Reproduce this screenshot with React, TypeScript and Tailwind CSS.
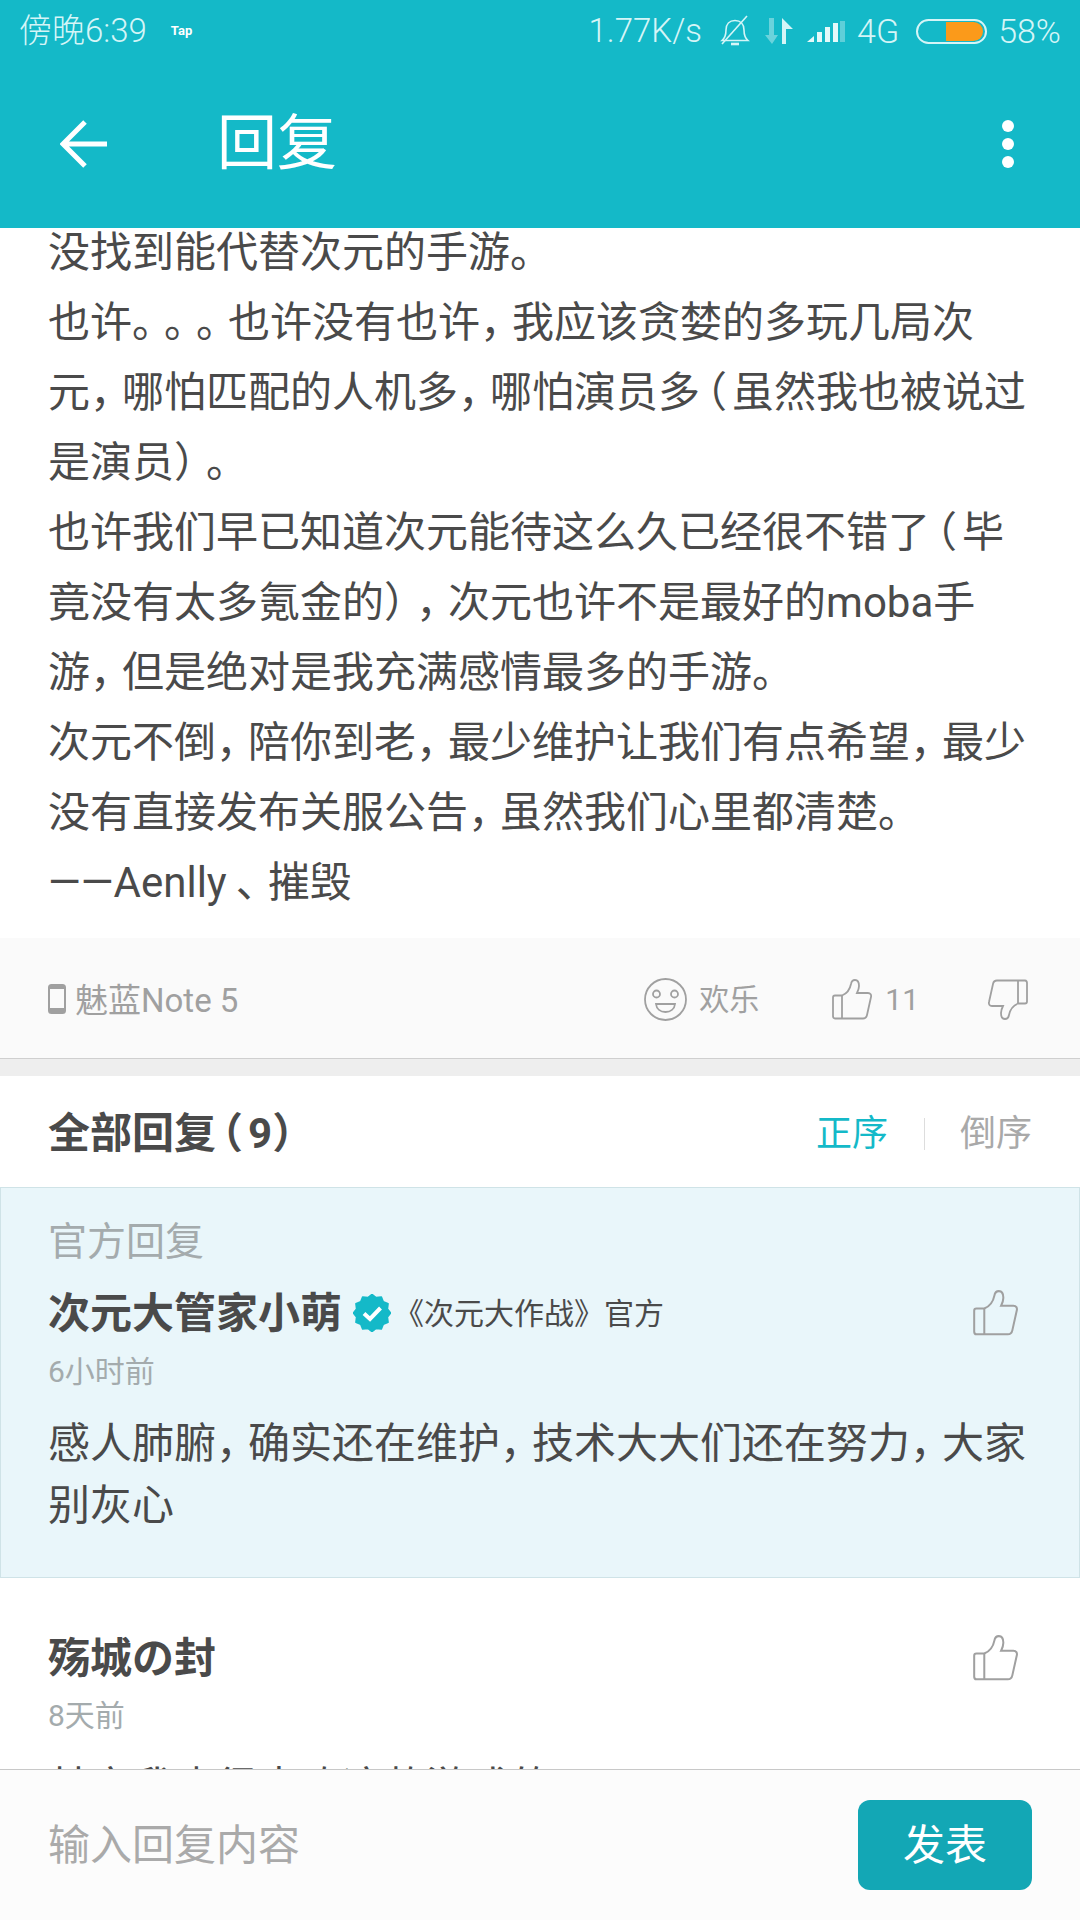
import React from "react";

const post = [
  "没找到能代替次元的手游。",
  "也许。。。也许没有也许，我应该贪婪的多玩几局次",
  "元，哪怕匹配的人机多，哪怕演员多（虽然我也被说过",
  "是演员）。",
  "也许我们早已知道次元能待这么久已经很不错了（毕",
  "竟没有太多氪金的），次元也许不是最好的moba手",
  "游，但是绝对是我充满感情最多的手游。",
  "次元不倒，陪你到老，最少维护让我们有点希望，最少",
  "没有直接发布关服公告，虽然我们心里都清楚。",
  "——Aenlly、摧毁",
];

const punctClass = (p: string) => {
  if (p === "（") return "ml-[-15px] mr-[5px]";
  if (p === "、") return "ml-[9px] tracking-[-10px]";
  return "tracking-[-10px]";
};

const Line = ({ text }: { text: string }) => (
  <div className="whitespace-nowrap [text-spacing-trim:space-all]">
    {text.split(/([，。（）、])/).map((part, i) =>
      i % 2 === 1 ? (
        <span key={i} className={punctClass(part)}>
          {part}
        </span>
      ) : (
        <span key={i}>{part}</span>
      )
    )}
  </div>
);

const ThumbUp = ({ className }: { className: string }) => (
  <svg viewBox="0 0 40 41" fill="none" stroke="currentColor" strokeWidth="1.8" className={className}>
    <path d="M3 16.5H10C15 14.5 18 10 19 5C19.5 2 21 1 23 1C26 1 27 4 27 7C27 10 26 12 25 14H36C38.5 14 39.5 16 39 18L35 36C34.5 38.5 33 39.5 31 39.5H3C1.5 39.5 1 38.5 1 37V18.5C1 17.5 1.5 16.5 3 16.5Z" />
    <path d="M10 16.5V39.5" />
  </svg>
);

const badgePoints = Array.from({ length: 24 }, (_, i) => {
  const r = i % 2 === 0 ? 18.6 : 16;
  const a = (i * Math.PI) / 12;
  return `${(19 + r * Math.sin(a)).toFixed(2)},${(19 - r * Math.cos(a)).toFixed(2)}`;
}).join(" ");

export default function App() {
  return (
    <div className="flex h-[1920px] w-[1080px] flex-col overflow-hidden bg-white font-['Roboto','Noto_Sans_CJK_SC',sans-serif] text-[#4a4a4a]">
      <header className="h-[228px] shrink-0 bg-[#14b9c8]">
        <div className="flex h-[62px] items-center pl-[19px] pr-[19px] text-[#d5f5f7]">
          <span className="text-[33px] font-light">傍晚6:39</span>
          <span className="ml-[24px] text-[13px] font-bold text-white">Tap</span>
          <div className="ml-auto flex items-center">
            <span className="text-[33px] font-light">1.77K/s</span>
            <svg viewBox="0 0 30 32" fill="none" stroke="currentColor" strokeWidth="1.6" className="ml-[18px] h-[32px] w-[30px]">
              <path d="M2 25.5C5 23 6 20 6 15C6 9 9.5 5.5 15 5.5C20.5 5.5 24 9 24 15C24 20 25 23 28 25.5Z" />
              <path d="M2 29L27 1" />
              <path d="M11 29H19" strokeWidth="2.6" />
            </svg>
            <svg viewBox="0 0 28 26" className="ml-[15px] h-[26px] w-[28px]">
              <path d="M4 0H9V17H13L7 26L0 17H4Z" fill="#6ad3dc" />
              <path d="M17 26V0L28 11H21V26Z" fill="#d5f5f7" />
            </svg>
            <svg viewBox="0 0 38 21" className="ml-[14px] h-[21px] w-[38px]">
              <path d="M0 21L7 15V21Z" fill="#e4f9fa" />
              <rect x="10" y="11" width="5" height="10" fill="#e4f9fa" />
              <rect x="18" y="6" width="5" height="15" fill="#e4f9fa" />
              <rect x="26" y="2" width="5" height="19" fill="#e4f9fa" />
              <rect x="33" y="0" width="5" height="21" fill="#5fcfd9" />
            </svg>
            <span className="ml-[12px] text-[34px] font-light">4G</span>
            <div className="relative ml-[17px] h-[25px] w-[71px] rounded-full border-2 border-[#d5f5f7]">
              <div className="absolute bottom-[1px] right-[2px] top-[1px] w-[37px] rounded-r-full bg-[#fb9a1a]" />
            </div>
            <span className="ml-[11px] text-[34px] font-light">58%</span>
          </div>
        </div>
        <div className="flex h-[166px] items-center pb-[2px] pl-[60px] pr-[66px] text-white">
          <svg viewBox="0 0 48 48" fill="none" stroke="currentColor" strokeWidth="5" className="h-[48px] w-[48px]">
            <path d="M47 24H4M25 2L3 24L25 46" />
          </svg>
          <span className="ml-[109px] text-[60px] leading-none">回复</span>
          <div className="ml-auto flex flex-col gap-[6px]">
            <div className="h-[12px] w-[12px] rounded-full bg-white" />
            <div className="h-[12px] w-[12px] rounded-full bg-white" />
            <div className="h-[12px] w-[12px] rounded-full bg-white" />
          </div>
        </div>
      </header>

      <main className="min-h-0 flex-1 overflow-hidden">
        <div className="-mt-[10px] px-[48px] pb-[20px] text-[42px] leading-[70px]">
          {post.map((l) => (
            <Line key={l} text={l} />
          ))}
        </div>

        <div className="flex h-[121px] items-center border-b border-[#cfcfcf] bg-[#fafafa] pl-[48px] pr-[52px] pt-[2px] text-[#a0a0a0]">
          <svg viewBox="0 0 18 30" fill="none" className="h-[30px] w-[18px]">
            <rect x="1" y="1" width="16" height="28" rx="2.5" stroke="#a0a0a0" strokeWidth="2" />
            <rect x="1" y="1" width="16" height="4" fill="#a0a0a0" />
            <rect x="1" y="24" width="16" height="5" fill="#a0a0a0" />
          </svg>
          <span className="ml-[9px] mt-[3px] text-[33px]">魅蓝Note 5</span>
          <svg viewBox="0 0 43 43" fill="none" stroke="currentColor" strokeWidth="1.8" className="ml-auto h-[43px] w-[43px]">
            <circle cx="21.5" cy="21.5" r="20.5" />
            <circle cx="12.5" cy="16" r="3.5" />
            <circle cx="30.5" cy="16" r="3.5" />
            <path d="M12 26H31C30.5 31 26.5 34 21.5 34C16.5 34 12.5 31 12 26Z" />
          </svg>
          <span className="ml-[12px] text-[30px]">欢乐</span>
          <ThumbUp className="ml-[73px] h-[41px] w-[40px]" />
          <span className="ml-[13px] text-[30px]">11</span>
          <ThumbUp className="ml-[69px] h-[41px] w-[40px] rotate-180" />
        </div>

        <div className="h-[17px] bg-[#eeeeee]" />

        <div className="flex h-[111px] items-center pl-[48px] pr-[48px] pt-[4px]">
          <div className="text-[42px] font-bold">
            <Line text="全部回复（9）" />
          </div>
          <span className="ml-auto text-[36px] text-[#14b9c8]">正序</span>
          <div className="ml-[36px] h-[32px] w-px bg-[#dddddd]" />
          <span className="ml-[35px] text-[36px] text-[#a9a9a9]">倒序</span>
        </div>

        <section className="h-[391px] border border-[#cfe3e7] bg-[#e9f6fa] pl-[47px] pr-[47px] pt-[28px]">
          <div className="text-[39px] leading-[52px] text-[#a4abad]">官方回复</div>
          <div className="mt-[17px] flex h-[56px] items-center">
            <span className="text-[42px] font-bold">次元大管家小萌</span>
            <svg viewBox="0 0 38 38" className="ml-[11px] h-[38px] w-[38px]">
              <polygon points={badgePoints} fill="#14b9c8" stroke="#14b9c8" strokeWidth="1.5" strokeLinejoin="round" />
              <path d="M11 19.5L17 25L27.5 14" fill="none" stroke="white" strokeWidth="4" />
            </svg>
            <span className="ml-[3px] text-[30px]">《次元大作战》官方</span>
            <ThumbUp className="ml-auto mr-[14px] h-[46px] w-[45px] text-[#a0a0a0]" />
          </div>
          <div className="mt-[11px] text-[30px] leading-[40px] text-[#a4abad]">6小时前</div>
          <div className="mt-[21px] text-[42px] leading-[62px]">
            <Line text="感人肺腑，确实还在维护，技术大大们还在努力，大家" />
            <Line text="别灰心" />
          </div>
        </section>

        <div className="px-[48px]">
          <div className="mt-[52px] flex h-[56px] items-center">
            <span className="text-[42px] font-bold">殇城の封</span>
            <ThumbUp className="ml-auto mr-[14px] h-[46px] w-[45px] text-[#a0a0a0]" />
          </div>
          <div className="mt-[10px] text-[30px] leading-[40px] text-[#a4abad]">8天前</div>
          <div className="mt-[21px] text-[42px] leading-[62px]">
            <Line text="其实我也很喜欢这款游戏的" />
          </div>
        </div>
      </main>

      <footer className="flex h-[151px] shrink-0 items-center justify-between border-t border-[#c8c8c8] bg-[#fcfcfc] pl-[48px] pr-[48px]">
        <span className="text-[42px] text-[#aaaaaa]">输入回复内容</span>
        <button className="flex h-[90px] w-[174px] items-center justify-center rounded-[12px] bg-[#13a7b5] text-[42px] text-white">
          发表
        </button>
      </footer>
    </div>
  );
}
